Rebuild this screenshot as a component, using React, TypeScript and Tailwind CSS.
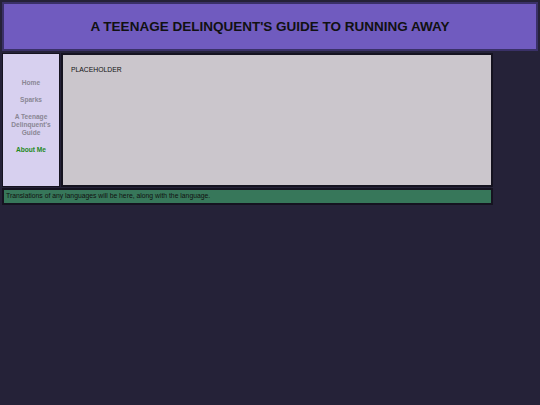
export default function App() {
  return (
    <div className="min-h-[405px] w-full bg-[#252238] p-[2px]" style={{ fontFamily: '"Liberation Sans", Arial, sans-serif' }}>
      <div className="h-[49px] border-2 border-[#3a3168] bg-[#705bbf] flex items-center justify-center pt-[1px]">
        <h1 className="text-[13.5px] font-bold text-[#111111]">A TEENAGE DELINQUENT'S GUIDE TO RUNNING AWAY</h1>
      </div>
      <div className="w-[491px] mt-[2px] flex gap-[1px]">
        <div className="w-[58px] h-[134px] border-[1.5px] border-[#151320] bg-[#d7d0ef] flex flex-col items-center pt-[25px] gap-[9px] text-[6.6px] font-bold leading-[8px] text-center">
          <span className="text-[#8a8794]">Home</span>
          <span className="text-[#8a8794]">Sparks</span>
          <span className="text-[#8a8794]">A Teenage<br />Delinquent's<br />Guide</span>
          <span className="text-[#1e8a1e]">About Me</span>
        </div>
        <div className="flex-1 h-[134px] border-2 border-[#151320] bg-[#cbc6cc] pl-[8px] pt-[10px] text-[6.8px] text-[#111111]">
          PLACEHOLDER
        </div>
      </div>
      <div className="w-[491px] mt-[1px] h-[17px] border-2 border-[#151320] bg-[#37775a] flex items-center pl-[2px] text-[6.8px] text-[#111111]">
        Translations of any languages will be here, along with the language.
      </div>
    </div>
  );
}
